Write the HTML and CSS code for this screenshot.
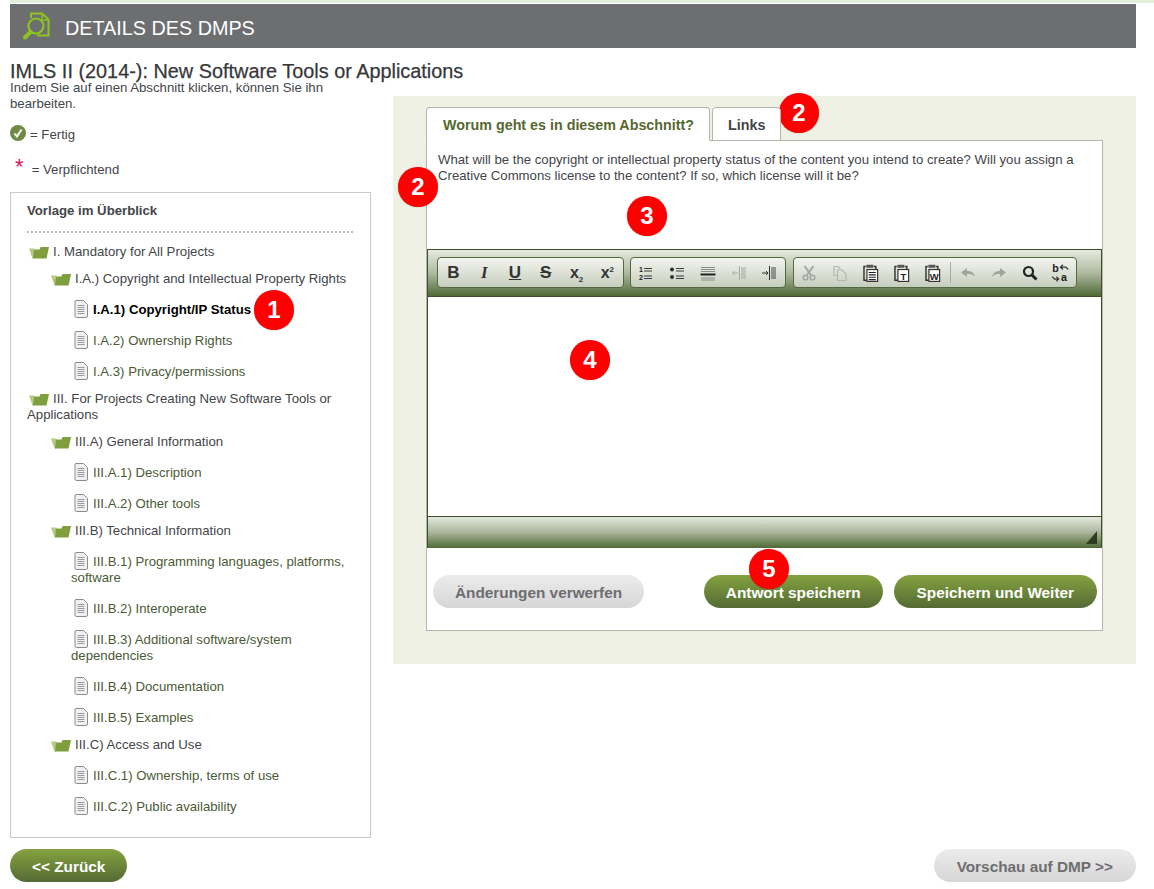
FILE: index.html
```html
<!DOCTYPE html>
<html lang="de">
<head>
    <meta charset="utf-8">
    <title>Details des DMPs</title>
    <link rel="stylesheet" href="styles.css">
</head>
<body>

<svg class="defs" xmlns="http://www.w3.org/2000/svg">
    <symbol id="i-folder" viewBox="0 0 20 13">
        <path d="M0 2.500h5.500L5 12.500H3.500z" fill="#b4cb84"/>
        <path d="M5 3.500h5.500l1-2.500H20l-2.500 11.500H4z" fill="#7f9f3e"/>
    </symbol>
    <symbol id="i-doc" viewBox="0 0 14 18">
        <path d="M1 1.500a1 1 0 0 1 1-1h7.500L13.500 4.500V16a1.500 1.500 0 0 1-1.500 1.500H2.500A1.500 1.500 0 0 1 1 16z" fill="#f1f1f1" stroke="#8b8b8b"/>
        <path d="M3.500 5.500h7M3.500 7.500h7M3.500 9.500h7M3.500 11.500h7M3.500 13.500h7" stroke="#9a9a9a"/>
    </symbol>
    <symbol id="i-clip" viewBox="0 0 16 16">
        <path d="M4 3H2.500v11.500H5" fill="none" stroke="#333" stroke-width="1.200"/>
        <path d="M11 3h1.500v2" fill="none" stroke="#333" stroke-width="1.200"/>
        <path d="M4.500 1.500h6v2.500h-6z" fill="#555"/>
        <rect x="5" y="5.500" width="9" height="10" fill="#fff" stroke="#333"/>
    </symbol>
</svg>

<div class="topline"></div>

<header class="pagehead">
    <svg class="pagehead-logo" viewBox="0 0 28 28" xmlns="http://www.w3.org/2000/svg">
        <path d="M8 6V1.500h11l6.500 6v16H14" fill="none" stroke="#8fc31f" stroke-width="2"/>
        <path d="M19 2v6h6" fill="none" stroke="#8fc31f" stroke-width="1.500"/>
        <circle cx="13" cy="14" r="7.500" fill="none" stroke="#8fc31f" stroke-width="2.200"/>
        <path d="M7.500 20 2 25.500" stroke="#8fc31f" stroke-width="4" stroke-linecap="round"/>
    </svg>
    <span class="pagehead-text">DETAILS DES DMPS</span>
</header>

<h1 class="plan-title">IMLS II (2014-): New Software Tools or Applications</h1>

<div class="columns">
    <aside class="sidebar">
        <p class="intro">Indem Sie auf einen Abschnitt klicken, können Sie ihn bearbeiten.</p>
        <p class="legend legend-done">
            <svg class="check" viewBox="0 0 16 16" xmlns="http://www.w3.org/2000/svg">
                <circle cx="8" cy="8" r="8" fill="#6f8a45"/>
                <path d="M4.500 8.500 7 11.500 11.500 4.500" fill="none" stroke="#f3f5ea" stroke-width="2.200"/>
            </svg>
            = Fertig
        </p>
        <p class="legend legend-required"><span class="star">*</span> = Verpflichtend</p>

        <nav class="outline">
            <h2>Vorlage im Überblick</h2>
            <ul class="tree">
                <li class="folder"><svg class="ico-folder"><use href="#i-folder"/></svg>I. Mandatory for All Projects
                    <ul>
                        <li class="folder"><svg class="ico-folder"><use href="#i-folder"/></svg>I.A.) Copyright and Intellectual Property Rights
                            <ul>
                                <li class="doc current"><svg class="ico-doc"><use href="#i-doc"/></svg>I.A.1) Copyright/IP Status</li>
                                <li class="doc"><svg class="ico-doc"><use href="#i-doc"/></svg>I.A.2) Ownership Rights</li>
                                <li class="doc"><svg class="ico-doc"><use href="#i-doc"/></svg>I.A.3) Privacy/permissions</li>
                            </ul>
                        </li>
                    </ul>
                </li>
                <li class="folder"><svg class="ico-folder"><use href="#i-folder"/></svg>III. For Projects Creating New Software Tools or Applications
                    <ul>
                        <li class="folder"><svg class="ico-folder"><use href="#i-folder"/></svg>III.A) General Information
                            <ul>
                                <li class="doc"><svg class="ico-doc"><use href="#i-doc"/></svg>III.A.1) Description</li>
                                <li class="doc"><svg class="ico-doc"><use href="#i-doc"/></svg>III.A.2) Other tools</li>
                            </ul>
                        </li>
                        <li class="folder"><svg class="ico-folder"><use href="#i-folder"/></svg>III.B) Technical Information
                            <ul>
                                <li class="doc"><svg class="ico-doc"><use href="#i-doc"/></svg>III.B.1) Programming languages, platforms, software</li>
                                <li class="doc"><svg class="ico-doc"><use href="#i-doc"/></svg>III.B.2) Interoperate</li>
                                <li class="doc"><svg class="ico-doc"><use href="#i-doc"/></svg>III.B.3) Additional software/system dependencies</li>
                                <li class="doc"><svg class="ico-doc"><use href="#i-doc"/></svg>III.B.4) Documentation</li>
                                <li class="doc"><svg class="ico-doc"><use href="#i-doc"/></svg>III.B.5) Examples</li>
                            </ul>
                        </li>
                        <li class="folder"><svg class="ico-folder"><use href="#i-folder"/></svg>III.C) Access and Use
                            <ul>
                                <li class="doc"><svg class="ico-doc"><use href="#i-doc"/></svg>III.C.1) Ownership, terms of use</li>
                                <li class="doc"><svg class="ico-doc"><use href="#i-doc"/></svg>III.C.2) Public availability</li>
                            </ul>
                        </li>
                    </ul>
                </li>
            </ul>
        </nav>
    </aside>

    <main class="panel">
        <div class="tabs">
            <a class="tab tab-active" href="#">Worum geht es in diesem Abschnitt?</a>
            <a class="tab" href="#">Links</a>
        </div>
        <div class="tab-body">
            <p class="question">What will be the copyright or intellectual property status of the content you intend to create? Will you assign a Creative Commons license to the content? If so, which license will it be?</p>

            <div class="editor">
                <div class="toolbar">
                    <div class="tool-group">
                        <span class="tool t-text t-b">B</span>
                        <span class="tool t-text t-i">I</span>
                        <span class="tool t-text t-u">U</span>
                        <span class="tool t-text t-s">S</span>
                        <span class="tool t-text t-script"><span>x<sub>2</sub></span></span>
                        <span class="tool t-text t-script"><span>x<sup>2</sup></span></span>
                    </div>
                    <div class="tool-group">
                        <span class="tool">
                            <svg viewBox="0 0 16 16" xmlns="http://www.w3.org/2000/svg">
                                <text x="1" y="7" class="svg-num">1</text>
                                <text x="1" y="15" class="svg-num">2</text>
                                <path d="M6 3.500h8M6 6h8M6 11h8M6 13.500h8" stroke="#3a3a3a" stroke-width="1.200"/>
                            </svg>
                        </span>
                        <span class="tool">
                            <svg viewBox="0 0 16 16" xmlns="http://www.w3.org/2000/svg">
                                <circle cx="3" cy="4.500" r="2" fill="#333"/>
                                <circle cx="3" cy="12" r="2" fill="#333"/>
                                <path d="M7 3.500h8M7 6h8M7 11h8M7 13.500h8" stroke="#3a3a3a" stroke-width="1.200"/>
                            </svg>
                        </span>
                        <span class="tool">
                            <svg viewBox="0 0 16 16" xmlns="http://www.w3.org/2000/svg">
                                <path d="M1 2.500h14M1 4.500h14M1 6.500h14M1 13h14M1 15h14" stroke="#8a8f86"/>
                                <path d="M0.500 9.500h15" stroke="#222" stroke-width="2"/>
                            </svg>
                        </span>
                        <span class="tool">
                            <svg viewBox="0 0 16 16" xmlns="http://www.w3.org/2000/svg">
                                <path d="M8.500 1v14" stroke="#a9aea5"/>
                                <path d="M10 3h5M10 5h5M10 7h5M10 9h5M10 11h5M10 13h5" stroke="#a9aea5"/>
                                <path d="M7 8H1.500M3.500 6 1.500 8l2 2" fill="none" stroke="#a9aea5"/>
                            </svg>
                        </span>
                        <span class="tool">
                            <svg viewBox="0 0 16 16" xmlns="http://www.w3.org/2000/svg">
                                <path d="M8.500 1v14" stroke="#333"/>
                                <path d="M10 3h5M10 5h5M10 7h5M10 9h5M10 11h5M10 13h5" stroke="#444"/>
                                <path d="M1 8h6M5 6l2 2-2 2" fill="none" stroke="#333"/>
                            </svg>
                        </span>
                    </div>
                    <div class="tool-group tool-group-last">
                        <span class="tool">
                            <svg viewBox="0 0 16 16" xmlns="http://www.w3.org/2000/svg">
                                <path d="M3.500 1 10 10M12.500 1 6 10" stroke="#a3a8a0" stroke-width="2"/>
                                <circle cx="4.500" cy="12.500" r="2.300" fill="none" stroke="#a3a8a0" stroke-width="1.600"/>
                                <circle cx="11.500" cy="12.500" r="2.300" fill="none" stroke="#a3a8a0" stroke-width="1.600"/>
                            </svg>
                        </span>
                        <span class="tool">
                            <svg viewBox="0 0 16 16" xmlns="http://www.w3.org/2000/svg">
                                <path d="M2 1.500h4l2 2v1" fill="none" stroke="#b3b8af" stroke-width="1.200"/>
                                <path d="M2 1.500v9h3" fill="none" stroke="#b3b8af" stroke-width="1.200"/>
                                <path d="M5.500 5h4.500l4 4v6.500H5.500z" fill="none" stroke="#b3b8af" stroke-width="1.200"/>
                            </svg>
                        </span>
                        <span class="tool tool-lg">
                            <svg viewBox="0 0 16 16" xmlns="http://www.w3.org/2000/svg">
                                <use href="#i-clip"/>
                                <path d="M6.500 8h6M6.500 10h6M6.500 12h6M6.500 14h6" stroke="#222"/>
                            </svg>
                        </span>
                        <span class="tool tool-lg">
                            <svg viewBox="0 0 16 16" xmlns="http://www.w3.org/2000/svg">
                                <use href="#i-clip"/>
                                <text x="9.500" y="14" class="svg-clip-letter">T</text>
                            </svg>
                        </span>
                        <span class="tool tool-lg">
                            <svg viewBox="0 0 16 16" xmlns="http://www.w3.org/2000/svg">
                                <use href="#i-clip"/>
                                <text x="9.500" y="14" class="svg-clip-letter">W</text>
                            </svg>
                        </span>
                        <span class="tool-sep"></span>
                        <span class="tool">
                            <svg viewBox="0 0 16 16" xmlns="http://www.w3.org/2000/svg">
                                <path d="M1 7.500 7 3v3c4 0 7 1.500 8 6-2-2.500-4.500-3-8-3v3z" fill="#9fa69b"/>
                            </svg>
                        </span>
                        <span class="tool">
                            <svg viewBox="0 0 16 16" xmlns="http://www.w3.org/2000/svg">
                                <path d="M15 7.500 9 3v3c-4 0-7 1.500-8 6 2-2.500 4.500-3 8-3v3z" fill="#9fa69b"/>
                            </svg>
                        </span>
                        <span class="tool">
                            <svg viewBox="0 0 16 16" xmlns="http://www.w3.org/2000/svg">
                                <circle cx="6.500" cy="6.500" r="4.500" fill="none" stroke="#222" stroke-width="2.200"/>
                                <path d="m10 10 4.500 4.500" stroke="#222" stroke-width="3"/>
                            </svg>
                        </span>
                        <span class="tool tool-lg">
                            <svg viewBox="0 0 16 16" xmlns="http://www.w3.org/2000/svg">
                                <text x="1" y="7.500" class="svg-replace">b</text>
                                <text x="8.500" y="15.500" class="svg-replace">a</text>
                                <path d="M8 3.500h4.500l2 2M10 1.500l-2 2 2 2M6.500 13.500H3l-2-2M4.500 11.500l2 2-2 2" fill="none" stroke="#333"/>
                            </svg>
                        </span>
                    </div>
                </div>
                <div class="edit-area"></div>
                <div class="statusbar"><span class="grip"></span></div>
            </div>

            <div class="actions">
                <a class="btn btn-grey btn-discard" href="#">Änderungen verwerfen</a>
                <a class="btn btn-green" href="#">Antwort speichern</a>
                <a class="btn btn-green btn-wide" href="#">Speichern und Weiter</a>
            </div>
        </div>
    </main>
</div>

<footer class="pager">
    <a class="btn btn-green" href="#">&lt;&lt; Zurück</a>
    <a class="btn btn-grey btn-wide" href="#">Vorschau auf DMP &gt;&gt;</a>
</footer>

<span class="badge badge-tree">1</span>
<span class="badge badge-links">2</span>
<span class="badge badge-guidance">2</span>
<span class="badge badge-question">3</span>
<span class="badge badge-editor">4</span>
<span class="badge badge-save">5</span>

</body>
</html>
```

FILE: styles.css
```css
html, body {
    margin: 0;
    padding: 0;
}

body {
    position: relative;
    height: 889px;
    overflow: hidden;
    background: #fff;
    color: #434549;
    font-family: "Liberation Sans", Arial, sans-serif;
    font-size: 13.2px;
    line-height: 16px;
}

a {
    text-decoration: none;
}

.defs {
    display: none;
}

.topline {
    height: 3px;
    margin: 0 0 1px 10px;
    background: #e2efdc;
}

.pagehead {
    display: flex;
    align-items: center;
    gap: 14px;
    height: 44px;
    margin: 0 18px 0 10px;
    padding-left: 13px;
    background: #6d6e70;
    color: #fff;
    font-size: 19.8px;
}

.pagehead-logo {
    width: 28px;
    height: 28px;
}

.pagehead-text {
    padding-top: 3px;
}

.plan-title {
    margin: 12px 0 0 10px;
    color: #36383b;
    font-size: 19.87px;
    font-weight: normal;
    line-height: 23px;
    -webkit-text-stroke: 0.25px #36383b;
}

.columns {
    display: grid;
    grid-template-columns: 361px 743px;
    column-gap: 22px;
    align-items: start;
    margin: -3px 18px 0 10px;
}

/* left column */

.intro {
    width: 330px;
    margin: 0;
}

.legend {
    margin: 0;
}

.legend-done {
    display: flex;
    align-items: center;
    gap: 4px;
    margin-top: 13px;
    height: 20px;
}

.check {
    width: 16px;
    height: 16px;
    margin-top: -4px;
}

.legend-required {
    margin-top: 17px;
    padding-left: 5px;
}

.star {
    display: inline-block;
    width: 12px;
    margin: -3px 1px 0 0;
    color: #e0105a;
    font-size: 22px;
    line-height: 16px;
    vertical-align: top;
}

.outline {
    height: 646px;
    box-sizing: border-box;
    margin-top: 14px;
    padding: 10px 17px 10px 16px;
    border: 1px solid #c9c9c9;
}

.outline h2 {
    margin: 0;
    padding-bottom: 12px;
    border-bottom: 2px dotted #b8b8b8;
    font-size: 13.2px;
    line-height: 16px;
}

.tree, .tree ul {
    margin: 0;
    padding: 0;
    list-style: none;
}

.tree ul {
    padding-left: 22px;
}

.folder {
    margin-top: 11px;
}

.doc {
    margin-top: 15px;
    color: #4a5a35;
}

.doc.current {
    color: #000;
    font-weight: bold;
}

.ico-folder {
    width: 20px;
    height: 13px;
    margin: 0 4px -3px 2px;
}

.ico-doc {
    width: 14px;
    height: 18px;
    margin: -2px 5px -4px 3px;
}

/* right column */

.panel {
    box-sizing: border-box;
    height: 568px;
    margin-top: 16px;
    padding: 11px 33px 0;
    background: #eef1e4;
}

.tabs {
    display: flex;
    gap: 2px;
    position: relative;
    z-index: 1;
    margin-bottom: -1px;
}

.tab {
    box-sizing: border-box;
    height: 34px;
    padding: 0 15px;
    border: 1px solid #b5b5ad;
    border-radius: 4px 4px 0 0;
    background: #fff;
    color: #434549;
    font-size: 14.3px;
    font-weight: bold;
    line-height: 35px;
}

.tab-active {
    padding-left: 16px;
    border-bottom-color: #fff;
    color: #55682f;
}

.tab-body {
    box-sizing: border-box;
    height: 491px;
    border: 1px solid #b5b5ad;
    background: #fff;
}

.question {
    height: 97px;
    margin: 0;
    padding: 11px 11px 0;
}

.editor {
    border: 1px solid #3f4f2c;
    border-width: 0 1px;
    height: 299px;
    margin: 0;
    display: flex;
    flex-direction: column;
}

.toolbar {
    display: flex;
    align-items: flex-start;
    gap: 6px;
    box-sizing: border-box;
    height: 47px;
    padding: 7px 9px 0;
    border-top: 1px solid #3f4f2c;
    background: linear-gradient(#e5eadf, #aebaa0 50%, #4f6a35);
}

.tool-group {
    display: flex;
    align-items: center;
    height: 29px;
    border: 1px solid #55693f;
    border-radius: 4px;
    background: linear-gradient(#f3f5ef, #c6cdbe);
}

.tool-group-last {
    margin-left: 1px;
}

.tool {
    display: flex;
    align-items: center;
    justify-content: center;
    width: 30.8px;
    height: 29px;
    color: #333;
}

.tool svg {
    width: 16px;
    height: 16px;
}

.tool-lg svg {
    width: 19px;
    height: 19px;
}

.tool-sep {
    width: 1px;
    height: 21px;
    margin: 0 2px;
    background: #a6aca0;
}

.t-text {
    font-size: 17px;
    font-weight: bold;
}

.t-i {
    font-family: "Liberation Serif", serif;
    font-style: italic;
}

.t-u {
    text-decoration: underline;
}

.t-s {
    text-decoration: line-through;
}

.t-script {
    font-size: 16px;
}

.t-script sub, .t-script sup {
    font-size: 8px;
    line-height: 0;
}

.t-script sub {
    vertical-align: -4px;
}

.t-script sup {
    vertical-align: 6px;
}

.svg-num {
    font: bold 7px "Liberation Sans", sans-serif;
    fill: #222;
}

.svg-clip-letter {
    font: bold 8px "Liberation Sans", sans-serif;
    fill: #222;
    text-anchor: middle;
}

.svg-replace {
    font: bold 9px "Liberation Sans", sans-serif;
    fill: #222;
}

.edit-area {
    height: 220px;
    border-top: 1px solid #3f4f2c;
    box-sizing: border-box;
    background: #fff;
}

.statusbar {
    position: relative;
    height: 32px;
    border-top: 1px solid #3f4f2c;
    box-sizing: border-box;
    background: linear-gradient(#e3e8dd, #a9b59b 50%, #4f6a35);
}

.grip {
    position: absolute;
    right: 4px;
    bottom: 4px;
    width: 0;
    height: 0;
    border-style: solid;
    border-width: 0 0 13px 11px;
    border-color: transparent transparent #2e3d22 transparent;
}

.actions {
    display: flex;
    gap: 11px;
    padding: 27px 5px 0 6px;
}

.btn {
    box-sizing: border-box;
    display: block;
    height: 33px;
    padding: 0 22px;
    border-radius: 17px;
    font-size: 15.35px;
    font-weight: bold;
    line-height: 35px;
    text-align: center;
    white-space: nowrap;
}

.btn-wide {
    padding: 0 23px;
}

.btn-green {
    background: linear-gradient(#84a23f, #536b34);
    color: #fff;
}

.btn-grey {
    background: linear-gradient(#ececec, #d6d6d6);
    color: #6d6e70;
}

.btn-discard {
    margin-right: auto;
}

.pager {
    display: flex;
    justify-content: space-between;
    margin: 11px 18px 0 10px;
}

/* numbered callouts lying over the page */

.badge {
    position: absolute;
    width: 40px;
    height: 40px;
    border-radius: 50%;
    background: #f00;
    color: #fff;
    font-size: 24px;
    font-weight: bold;
    line-height: 40px;
    text-align: center;
    box-shadow: 0 0 1px rgba(90, 0, 0, 0.5);
}

.badge-tree {
    left: 254px;
    top: 290px;
}

.badge-links {
    left: 779px;
    top: 93px;
}

.badge-guidance {
    left: 398px;
    top: 167px;
}

.badge-question {
    left: 627px;
    top: 196px;
}

.badge-editor {
    left: 570px;
    top: 340px;
}

.badge-save {
    left: 749px;
    top: 549px;
}
```
